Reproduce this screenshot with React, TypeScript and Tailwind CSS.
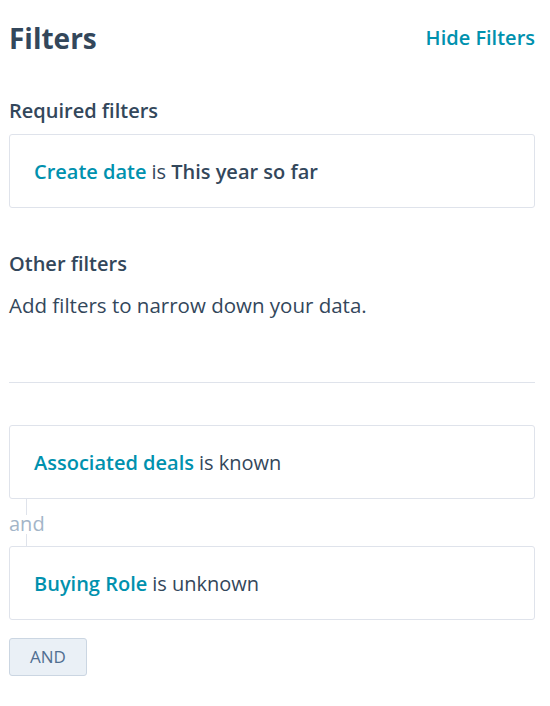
export default function App() {
  return (
    <div className="min-h-screen bg-white pl-[9px] pr-[15px] text-[#33475b] [font-family:'Open_Sans',Lato,sans-serif]">
      {/* header */}
      <div className="flex items-center justify-between pt-[19px]">
        <h1 className="text-[28px] font-bold leading-[38px]">Filters</h1>
        <button className="text-[20px] font-semibold text-[#0091ae]">Hide Filters</button>
      </div>

      <h2 className="mt-[42px] text-[20px] font-semibold leading-[24px]">Required filters</h2>
      <div className="mt-[11px] flex h-[74px] items-center rounded-[3px] border border-[#dfe3eb] px-[24px] pt-[2px] text-[20px]">
        <span className="font-semibold text-[#0091ae]">Create date</span>
        <span className="mx-[5px]">is</span>
        <span className="font-semibold">This year so far</span>
      </div>

      <h2 className="mt-[44px] text-[20px] font-semibold leading-[24px]">Other filters</h2>
      <p className="mt-[17px] text-[20.5px] leading-[24px]">Add filters to narrow down your data.</p>

      <hr className="mt-[65px] border-t border-[#dfe3eb]" />

      {/* filter group */}
      <div className="mt-[42px]">
        <div className="flex h-[74px] items-center rounded-[3px] border border-[#dfe3eb] px-[24px] pt-[2px] text-[20px]">
          <span className="font-semibold text-[#0091ae]">Associated deals</span>
          <span className="ml-[5px]">is known</span>
        </div>
        <div className="relative flex h-[47px] items-center pt-[3px]">
          <div className="absolute left-[17px] top-0 h-[16px] w-px bg-[#dfe3eb]" />
          <span className="text-[20px] leading-none text-[#a3b5c8]">and</span>
          <div className="absolute bottom-0 left-[17px] h-[12px] w-px bg-[#dfe3eb]" />
        </div>
        <div className="flex h-[74px] items-center rounded-[3px] border border-[#dfe3eb] px-[24px] pt-[2px] text-[20px]">
          <span className="font-semibold text-[#0091ae]">Buying Role</span>
          <span className="ml-[5px]">is unknown</span>
        </div>
      </div>

      <button className="mt-[18px] h-[38px] w-[78px] rounded-[3px] border border-[#cbd6e2] bg-[#eaf0f6] text-[17px] text-[#506e91]">
        AND
      </button>
    </div>
  );
}
